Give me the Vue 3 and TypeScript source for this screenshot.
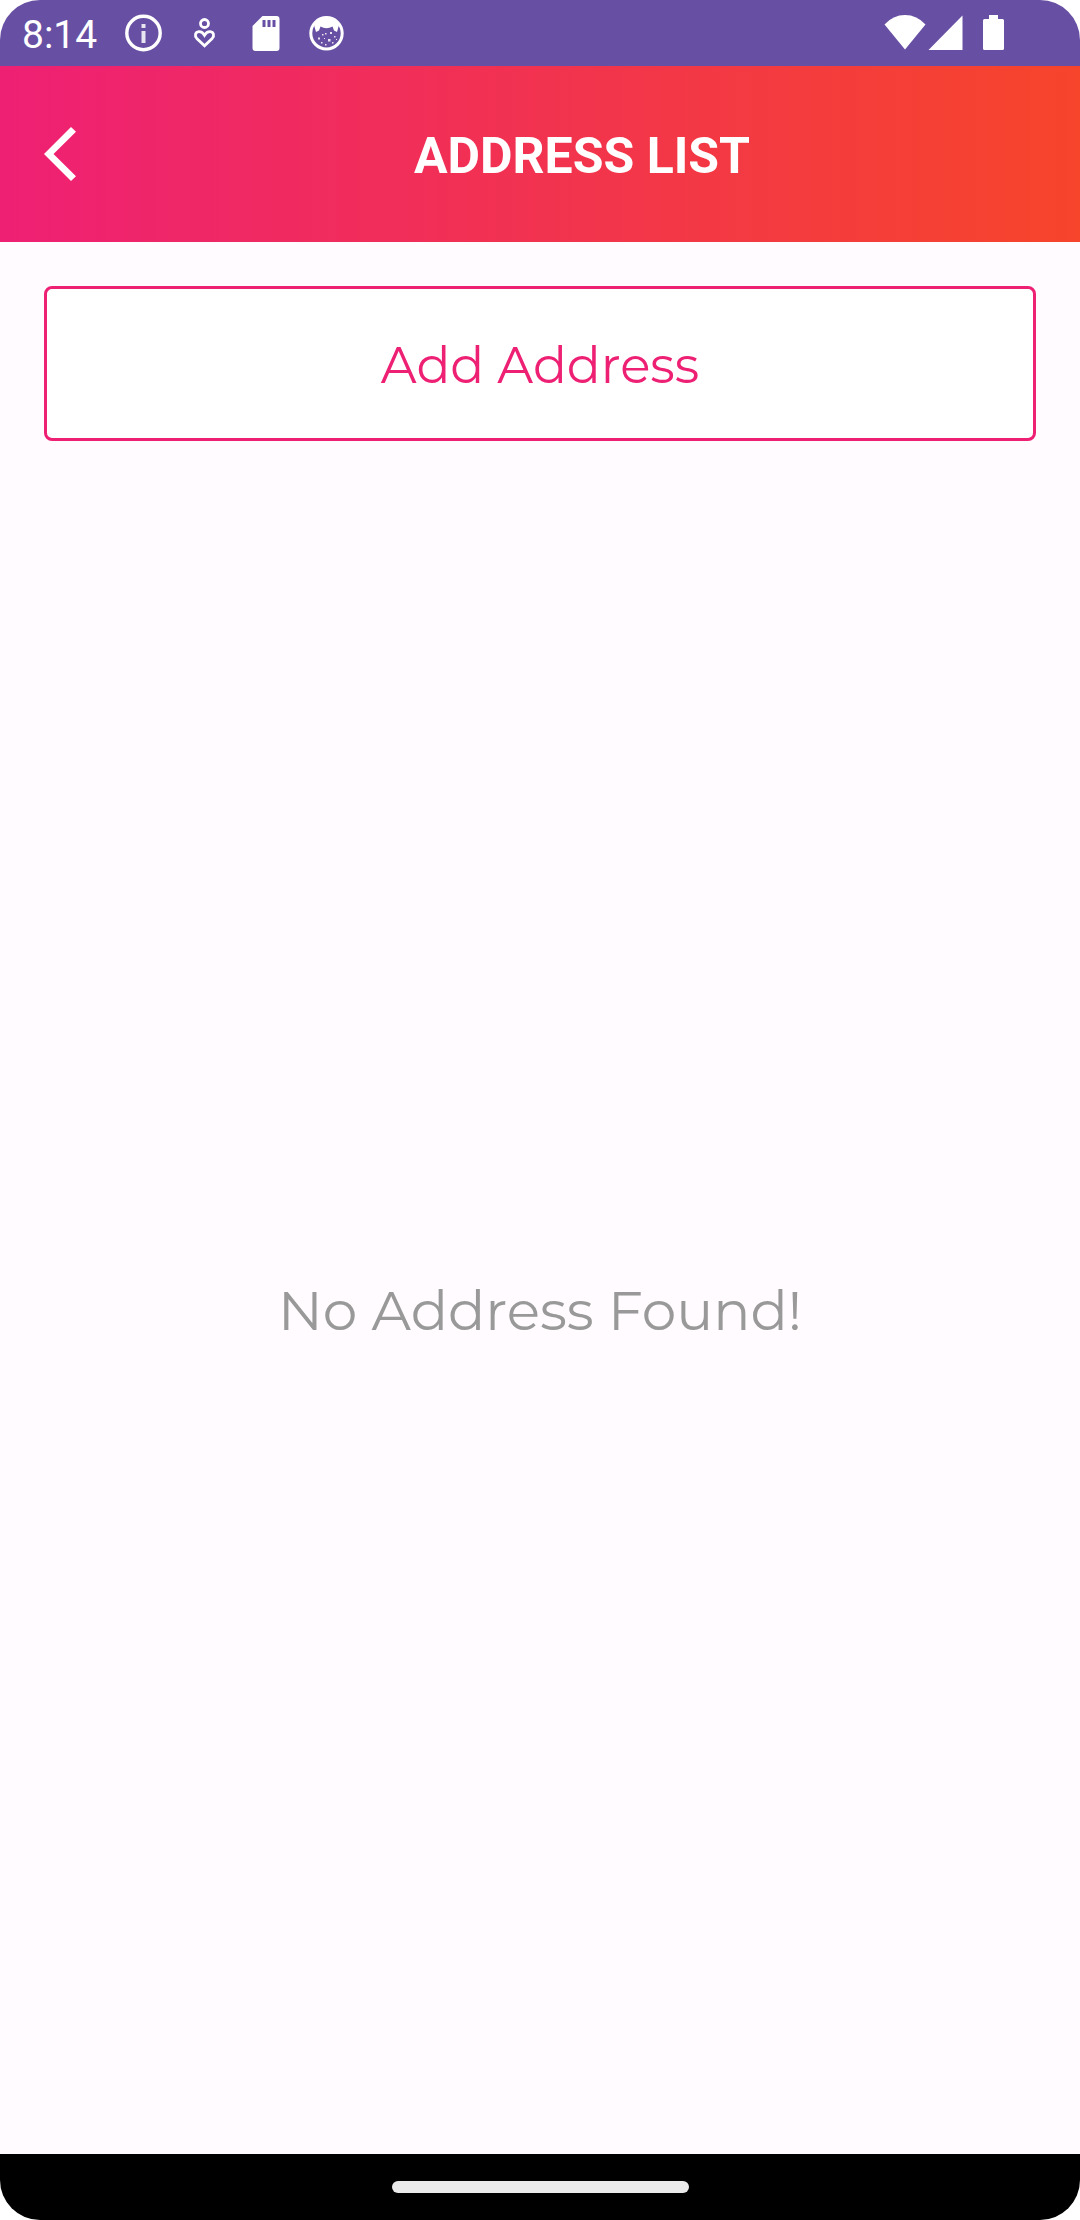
<script setup lang="ts">
import { ref } from 'vue'

const title = ref('ADDRESS LIST')
const addresses = ref<string[]>([])
</script>

<template>
  <div class="screen">
    <div class="status-bar">
      <span class="time">8:14</span>
      <div class="notifications">
        <svg class="icon" viewBox="0 0 40 40" aria-hidden="true">
          <circle cx="19.5" cy="20" r="16.7" fill="none" stroke="currentColor" stroke-width="3.4" />
          <path d="M17.500 11h4v4h-4zM17.500 18h4v12h-4z" fill="currentColor" opacity=".85" />
        </svg>
        <svg class="icon" viewBox="0 0 40 40" aria-hidden="true">
          <circle cx="19.500" cy="10.500" r="4" fill="none" stroke="currentColor" stroke-width="2.8" />
          <path d="M19.500 32.800 11.800 25.400C9.300 22.800 10.300 19 13.800 18.600c2.600-.2 4.500 1.600 5.700 3.600 1.200-2 3.100-3.800 5.700-3.600 3.500.4 4.500 4.200 2 6.800z" fill="none" stroke="currentColor" stroke-width="2.8" />
        </svg>
        <svg class="icon" viewBox="0 0 40 40" aria-hidden="true">
          <path fill-rule="evenodd" d="M16.500 3h14q3 0 3 3v29q0 3-3 3h-21q-3 0-3-3V13zM16.500 7v7h3V7zm5 0v7h3V7zm5 0v7h3V7z" fill="currentColor" />
        </svg>
        <svg class="icon" viewBox="0 0 40 40" aria-hidden="true">
          <circle cx="19.500" cy="20.300" r="15.700" fill="none" stroke="currentColor" stroke-width="3" />
          <path d="M7 12Q12 4 19.500 4T32 12l-2 7-3-1.500-1.500-4Q19.500 17 13.500 13.500l-1.500 4L9 19z" fill="currentColor" />
          <path d="M11 24.500h2v2h-2zM15 21h1.500v1.500H15zM23 19h2v2h-2zM21 26h2.500v2.500H21zM27 23h1.500v1.500H27zM14 29h1.500v1.500H14zM18 31h1.500v1.500H18zM25 29h1.500v1.500H25zM18 20h1.500v1.500H18zM29 26h1v1h-1zM17 25h1v1h-1z" fill="currentColor" opacity=".85" />
        </svg>
      </div>
      <div class="system">
        <svg class="icon wide" viewBox="0 0 44 40" aria-hidden="true">
          <path d="M1.500 11.500Q10 2 22 2t20.500 9.500L22 36.500z" fill="currentColor" />
        </svg>
        <svg class="icon" viewBox="0 0 40 40" aria-hidden="true">
          <path d="M1.500 37 35.500 2.500V37z" fill="currentColor" />
        </svg>
        <svg class="icon" viewBox="0 0 40 40" aria-hidden="true">
          <path d="M18 2h9v4h4.500q1.500 0 1.500 1.500v28q0 1.500-1.500 1.500h-18q-1.500 0-1.500-1.500v-28Q12 6 13.500 6H18z" fill="currentColor" />
        </svg>
      </div>
    </div>

    <header class="app-bar">
      <button class="back" type="button" aria-label="Back">
        <svg viewBox="0 0 32 54" aria-hidden="true">
          <path d="M27 0 32 4.800 9.500 27 32 49.200 27 54 0 27z" fill="currentColor" />
        </svg>
      </button>
      <h1>{{ title }}</h1>
    </header>

    <main class="content">
      <button class="add" type="button">Add Address</button>
      <ul v-if="addresses.length" class="list">
        <li v-for="address in addresses" :key="address">{{ address }}</li>
      </ul>
      <p v-else class="empty">No Address Found!</p>
    </main>

    <div class="nav-bar"><span class="handle"></span></div>
  </div>
</template>

<style>
body {
  margin: 0;
  background: #fff;
}
</style>

<style scoped>
.screen {
  display: flex;
  flex-direction: column;
  min-height: 100vh;
  border-radius: 40px;
  overflow: hidden;
  background: #fffbff;
  font-family: Roboto, sans-serif;
}

.status-bar {
  display: flex;
  align-items: center;
  height: 66px;
  padding: 0 69px 0 22px;
  box-sizing: border-box;
  background: #6750a3;
  color: #fff;
}

.time {
  width: 102px;
  font-size: 39px;
  line-height: 48px;
  padding-top: 4px;
}

.notifications {
  display: flex;
  gap: 21px;
}

.system {
  display: flex;
  margin-left: auto;
}

.icon {
  display: block;
  width: 40px;
  height: 40px;
}

.system .icon + .icon + .icon {
  margin-left: 4px;
}

.icon.wide {
  width: 44px;
}

.app-bar {
  display: flex;
  align-items: center;
  height: 176px;
  padding-right: 36px;
  box-sizing: border-box;
  background: linear-gradient(90deg, #ee2074, #f6452b);
  color: #fff;
}

.back {
  padding: 44px;
  border: 0;
  background: none;
  color: inherit;
}

.back svg {
  display: block;
  width: 32px;
  height: 54px;
}

h1 {
  flex: 1;
  margin: 0;
  padding-top: 4px;
  text-align: center;
  font-size: 50px;
  line-height: 60px;
  font-weight: 700;
}

.content {
  flex: 1;
  display: flex;
  flex-direction: column;
  padding: 44px 44px 0;
  font-family: Montserrat, Inter, sans-serif;
  font-weight: 400;
}

.add {
  height: 155px;
  padding: 4px 0 0;
  border: 3px solid #ee2074;
  border-radius: 8px;
  background: #fff;
  color: #ee2074;
  font: inherit;
  font-size: 50px;
}

.list {
  margin: 44px 0;
  padding: 0;
  list-style: none;
  font-size: 50px;
}

.empty {
  margin: auto;
  padding-top: 26px;
  color: #999;
  font-size: 55px;
  line-height: 72px;
}

.nav-bar {
  display: flex;
  align-items: center;
  justify-content: center;
  height: 66px;
  background: #000;
}

.handle {
  width: 28%;
  max-width: 297px;
  height: 12px;
  border-radius: 6px;
  background: #eaeaea;
}
</style>
